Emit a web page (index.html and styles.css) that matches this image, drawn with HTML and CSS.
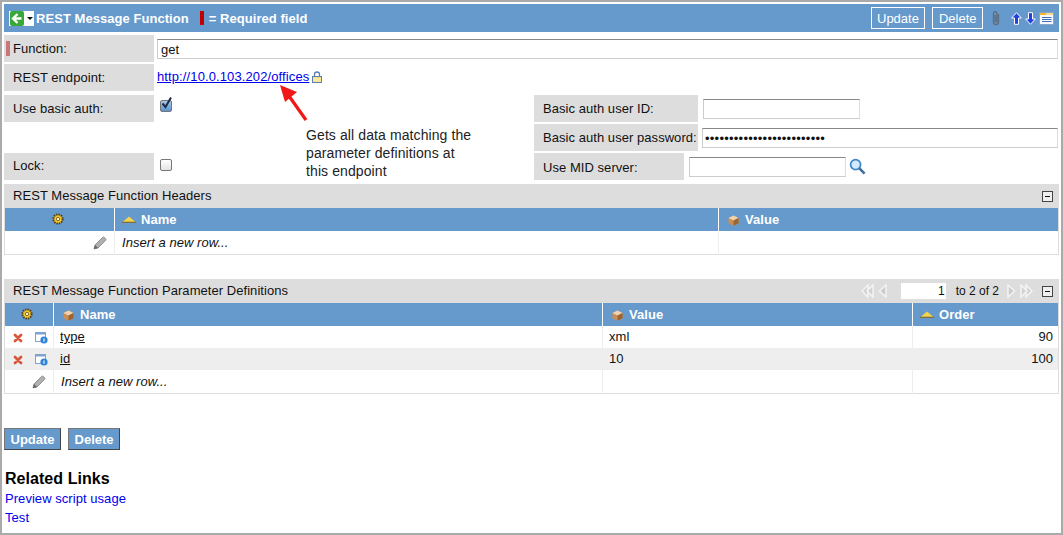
FILE: index.html
```html
<!DOCTYPE html>
<html lang="en">
<head>
    <meta charset="UTF-8">
    <title>REST Message Function</title>
    <link rel="stylesheet" href="styles.css">
</head>
<body>
    <svg class="sprites" width="0" height="0">
        <symbol id="gear" viewBox="0 0 12 12">
            <circle cx="6" cy="6" r="4.6" fill="#e8b92c" stroke="#4a3a10" stroke-width="2" stroke-dasharray="1.4 1"/>
            <circle cx="6" cy="6" r="3.2" fill="#f2c83a"/>
            <circle cx="6" cy="6" r="1.7" fill="#fff6c4" stroke="#6a5212" stroke-width=".8"/>
        </symbol>
        <symbol id="sort" viewBox="0 0 14 7">
            <path d="M7 .5L13.5 6H.5z" fill="#f4d44a"/>
            <path d="M0 6.300h14" stroke="#7d6a38" stroke-width="1.2"/>
        </symbol>
        <symbol id="box" viewBox="0 0 11 11">
            <path d="M5.500.5l5 2.400v5.400l-5 2.400-5-2.400V2.900z" fill="#c98f55"/>
            <path d="M5.500.5l5 2.400-5 2.500-5-2.500z" fill="#f0d3ad"/>
            <path d="M5.500 5.400v5.300l5-2.400V2.900z" fill="#9c6433"/>
        </symbol>
        <symbol id="pencil" viewBox="0 0 14 14">
            <path d="M1 13l1-4 7.500-7.500a1.400 1.400 0 0 1 2 0l1 1a1.400 1.400 0 0 1 0 2L5 12z" fill="#b0b0b0" stroke="#808080" stroke-width=".8"/>
            <path d="M1 13l1-4 3 3z" fill="#666"/>
        </symbol>
        <symbol id="cross" viewBox="0 0 10 10">
            <path d="M2 2l6 6M8 2l-6 6" stroke="#d9563a" stroke-width="2.8" stroke-linecap="round"/>
        </symbol>
        <symbol id="info" viewBox="0 0 13 13">
            <rect x=".5" y="1.500" width="10" height="9" fill="#fff" stroke="#7fa3cf"/>
            <path d="M.5 2h10v1.500H.5z" fill="#7fa3cf"/>
            <circle cx="9" cy="9" r="3.6" fill="#2f84d6"/>
            <path d="M9 7.400v3.300" stroke="#fff" stroke-width="1.1"/>
        </symbol>
        <symbol id="pager" viewBox="0 0 9 14">
            <path d="M8 1L1.500 7 8 13z" fill="#cbcbcb" stroke="#f4f4f4" stroke-width="1.5"/>
        </symbol>
        <symbol id="pager-double" viewBox="0 0 13 14">
            <path d="M7 1L1 7l6 6z" fill="#d2d2d2" stroke="#f4f4f4" stroke-width="1.5"/>
            <path d="M12 1L6 7l6 6z" fill="#d2d2d2" stroke="#f4f4f4" stroke-width="1.5"/>
        </symbol>
    </svg>

    <div class="page">
        <header class="title-bar">
            <svg class="back-icon" width="25" height="15" viewBox="0 0 25 15">
                <rect width="25" height="15" fill="#fff"/>
                <rect x="1" y="0" width="14" height="15" rx="2" fill="#38a838"/>
                <path d="M12.500 7.500H5M8.500 3l-4.500 4.500 4.500 4.500" fill="none" stroke="#fff" stroke-width="2.4"/>
                <path d="M18 6h6l-3 3z" fill="#111"/>
            </svg>
            <span class="title-text title-main">REST Message Function</span>
            <span class="required-mark"></span>
            <span class="title-text">= Required field</span>
            <span class="title-actions">
                <button class="outline-btn" type="button">Update</button>
                <button class="outline-btn" type="button">Delete</button>
                <svg class="clip-icon" width="10" height="16" viewBox="0 0 10 16">
                    <path d="M7.500 4v8a2.500 2.500 0 0 1-5 0V3.500a1.700 1.700 0 0 1 3.400 0V11a.8.8 0 0 1-1.600 0V5" fill="none" stroke="#5f6f80" stroke-width="1.4"/>
                </svg>
                <svg class="nav-arrow" width="11" height="13" viewBox="0 0 11 13">
                    <path d="M5.500.7L10.300 6H7.500v6.300h-4V6H.7z" fill="#1f3fe0" stroke="#fff"/>
                </svg>
                <svg class="nav-arrow" width="11" height="13" viewBox="0 0 11 13">
                    <path d="M5.500 12.300L10.300 7H7.500V.7h-4V7H.7z" fill="#1f3fe0" stroke="#fff"/>
                </svg>
                <svg class="list-icon" width="15" height="13" viewBox="0 0 15 13">
                    <rect x=".5" y=".5" width="14" height="12" fill="#f6f8fd" stroke="#8aa4c8"/>
                    <path d="M1 1h6v2H1z" fill="#f2b632"/>
                    <path d="M7 1h7v2H7z" fill="#f7dc8a"/>
                    <path d="M3 5.500h9.500M3 7.500h9.500M3 9.500h9.500" stroke="#3f6fb5"/>
                </svg>
            </span>
        </header>

        <div class="form-row">
            <div class="field-label field-label-required">Function:</div>
            <input class="text-input text-input-wide" type="text" value="get">
        </div>
        <div class="form-row">
            <div class="field-label">REST endpoint:</div>
            <div class="endpoint">
                <a href="#">http://10.0.103.202/offices</a>
                <svg class="lock-icon" width="10" height="12" viewBox="0 0 10 12">
                    <path d="M2.500 6V3.500a2.500 2.500 0 0 1 5 0V6" fill="none" stroke="#5a7fb5" stroke-width="1.3"/>
                    <rect x=".5" y="5.500" width="9" height="6" fill="#f3dd7e" stroke="#5a7fb5"/>
                    <path d="M1 8h8M1 10h8" stroke="#fff2b5"/>
                </svg>
            </div>
        </div>

        <div class="auth-block">
            <div class="auth-left">
                <div class="form-row form-row-tight">
                    <div class="field-label">Use basic auth:</div>
                    <span class="check check-on">
                        <svg width="13" height="15" viewBox="0 0 13 15">
                            <path d="M2.500 7.500l3 3.500L11 1.500" fill="none" stroke="#1d2c46" stroke-width="2"/>
                        </svg>
                    </span>
                </div>
                <div class="form-row form-row-tight">
                    <div class="field-label field-label-lock">Lock:</div>
                    <span class="check"></span>
                </div>
            </div>
            <div class="auth-right">
                <div class="form-row form-row-tight">
                    <div class="field-label field-label-mid">Basic auth user ID:</div>
                    <input class="text-input text-input-short" type="text">
                </div>
                <div class="form-row">
                    <div class="field-label field-label-mid">Basic auth user password:</div>
                    <input class="text-input text-input-fill password" type="text" value="•••••••••••••••••••••••••">
                </div>
                <div class="form-row">
                    <div class="field-label field-label-mid-short">Use MID server:</div>
                    <input class="text-input text-input-short" type="text">
                    <svg class="search-icon" width="17" height="17" viewBox="0 0 18 18">
                        <circle cx="7" cy="7" r="5.3" fill="#d5ebfb" stroke="#3f86c9" stroke-width="1.8"/>
                        <path d="M11 11l5.500 5.500" stroke="#3d6f9f" stroke-width="2.8"/>
                    </svg>
                </div>
            </div>
        </div>

        <div class="callout">
            <svg class="callout-arrow" width="30" height="37" viewBox="0 0 30 37">
                <path d="M26 35L9 11" stroke="#f01818" stroke-width="3.2"/>
                <path d="M0 0l17 7L5 17z" fill="#f01818"/>
            </svg>
            <p>Gets all data matching the parameter definitions at this endpoint</p>
        </div>

        <section class="related-list">
            <div class="list-heading">
                <span>REST Message Function Headers</span>
                <span class="collapse-btn"></span>
            </div>
            <table class="grid grid-headers">
                <colgroup><col class="col-a"><col class="col-b"><col></colgroup>
                <tr class="grid-head">
                    <th class="center"><svg class="ico-gear"><use href="#gear"/></svg></th>
                    <th><svg class="ico-sort"><use href="#sort"/></svg>Name</th>
                    <th><svg class="ico-box"><use href="#box"/></svg>Value</th>
                </tr>
                <tr>
                    <td class="right"><svg class="ico-pencil"><use href="#pencil"/></svg></td>
                    <td class="insert">Insert a new row...</td>
                    <td></td>
                </tr>
            </table>
        </section>

        <section class="related-list related-list-second">
            <div class="list-heading">
                <span>REST Message Function Parameter Definitions</span>
                <span class="pager">
                    <svg class="ico-pager-double"><use href="#pager-double"/></svg>
                    <svg class="ico-pager"><use href="#pager"/></svg>
                    <span class="page-input">1</span>
                    <span class="page-count">to 2 of 2</span>
                    <svg class="ico-pager flip"><use href="#pager"/></svg>
                    <svg class="ico-pager-double flip"><use href="#pager-double"/></svg>
                </span>
                <span class="collapse-btn"></span>
            </div>
            <table class="grid grid-params">
                <colgroup><col class="col-a"><col class="col-b"><col class="col-c"><col></colgroup>
                <tr class="grid-head">
                    <th class="center"><svg class="ico-gear"><use href="#gear"/></svg></th>
                    <th><svg class="ico-box"><use href="#box"/></svg>Name</th>
                    <th><svg class="ico-box"><use href="#box"/></svg>Value</th>
                    <th><svg class="ico-sort"><use href="#sort"/></svg>Order</th>
                </tr>
                <tr>
                    <td class="row-actions"><svg class="ico-cross"><use href="#cross"/></svg><svg class="ico-info"><use href="#info"/></svg></td>
                    <td><a class="record-link" href="#">type</a></td>
                    <td>xml</td>
                    <td class="right">90</td>
                </tr>
                <tr class="row-alt">
                    <td class="row-actions"><svg class="ico-cross"><use href="#cross"/></svg><svg class="ico-info"><use href="#info"/></svg></td>
                    <td><a class="record-link" href="#">id</a></td>
                    <td>10</td>
                    <td class="right">100</td>
                </tr>
                <tr>
                    <td class="right"><svg class="ico-pencil"><use href="#pencil"/></svg></td>
                    <td class="insert">Insert a new row...</td>
                    <td></td>
                    <td></td>
                </tr>
            </table>
        </section>

        <div class="bottom-actions">
            <button class="solid-btn" type="button">Update</button>
            <button class="solid-btn" type="button">Delete</button>
        </div>

        <h3 class="links-title">Related Links</h3>
        <a class="plain-link" href="#">Preview script usage</a>
        <a class="plain-link" href="#">Test</a>
    </div>
</body>
</html>
```

FILE: styles.css
```css
html, body {
    margin: 0;
    padding: 0;
    height: 100%;
}
body {
    font-family: "Liberation Sans", Arial, sans-serif;
    font-size: 13px;
    letter-spacing: .05px;
    color: #111;
    background: #fff;
}
.sprites {
    position: absolute;
}
.page {
    position: relative;
    box-sizing: border-box;
    height: 535px;
    border: 2px solid #aaa;
    padding: 2px 2px 0;
    overflow: hidden;
}

/* title bar */
.title-bar {
    display: flex;
    align-items: center;
    height: 28px;
    background: #6699cc;
    padding: 0 5px;
}
.back-icon {
    flex: none;
}
.title-text {
    color: #fff;
    font-weight: bold;
    white-space: nowrap;
}
.title-main {
    margin-left: 2px;
}
.required-mark {
    width: 4px;
    height: 14px;
    background: #c00000;
    margin: 0 5px 0 11px;
}
.title-actions {
    margin-left: auto;
    display: flex;
    align-items: center;
}
.outline-btn {
    font: 13px "Liberation Sans", Arial, sans-serif;
    color: #fff;
    background: transparent;
    border: 1px solid #fff;
    height: 22px;
    padding: 0 5.5px;
    margin-right: 7px;
}
.clip-icon {
    margin: 0 10px 0 1px;
}
.nav-arrow {
    margin-right: 3px;
}

/* form */
.form-row {
    display: flex;
    align-items: flex-start;
    margin-top: 2px;
}
.title-bar + .form-row {
    margin-top: 3px;
}
.form-row-tight {
    margin-top: 0;
}
.field-label {
    box-sizing: border-box;
    flex: none;
    width: 150px;
    height: 27px;
    line-height: 28px;
    padding-left: 9px;
    margin-right: 3px;
    background: #dddddd;
}
.field-label-required {
    position: relative;
}
.field-label-required::before {
    content: "";
    position: absolute;
    left: 2px;
    top: 6px;
    width: 4px;
    height: 15px;
    background: #cc7777;
}
.field-label-lock {
    line-height: 26px;
}
.field-label-mid {
    width: 164px;
    margin-right: 4px;
}
.field-label-mid-short {
    width: 150px;
    margin-right: 5px;
    line-height: 29px;
}
.text-input {
    box-sizing: border-box;
    height: 20px;
    margin-top: 4px;
    padding: 0 3px;
    font: 13px "Liberation Sans", Arial, sans-serif;
    color: #111;
    border: 1px solid #ccc;
    border-top-color: #888;
    border-right-color: #ddd;
    background: #fff;
    outline: none;
}
.text-input-wide {
    width: 901px;
}
.text-input-short {
    width: 157px;
}
.field-label-mid + .text-input-short {
    margin-left: 1px;
}
.text-input-fill {
    width: 356px;
}
.password {
    letter-spacing: .25px;
    padding-left: 2px;
}
.endpoint {
    display: flex;
    align-items: center;
    gap: 3px;
    height: 24px;
    letter-spacing: .11px;
}
.endpoint a {
    color: #0000ee;
}
.lock-icon {
    margin-top: 1px;
}
.auth-block {
    display: flex;
    margin-top: 4px;
}
.auth-left {
    width: 530px;
    flex: none;
    display: flex;
    flex-direction: column;
    justify-content: space-between;
}
.auth-right {
    flex: 1;
}
.check {
    box-sizing: border-box;
    display: flex;
    width: 12px;
    height: 12px;
    margin: 6px 0 0 3px;
    border: 1px solid #777;
    border-radius: 2px;
    background: linear-gradient(#fff, #e3e3e3);
}
.check-on {
    background: linear-gradient(#a9c9ea, #5b94cf);
    position: relative;
    margin-top: 5px;
}
.check-on svg {
    position: absolute;
    left: -1px;
    top: -5px;
}
.search-icon {
    margin: 5px 0 0 3px;
}

/* annotation drawn over the form */
.callout {
    position: absolute;
    left: 304px;
    top: 84px;
    width: 172px;
}
.callout-arrow {
    position: absolute;
    left: -26px;
    top: -1px;
}
.callout p {
    margin: 40px 0 0;
    font-size: 14px;
    letter-spacing: .1px;
    line-height: 18px;
    color: #222;
}

/* related lists */
.related-list {
    margin-top: 4px;
}
.related-list-second {
    margin-top: 24px;
}
.list-heading {
    display: flex;
    align-items: center;
    box-sizing: border-box;
    height: 24px;
    padding: 0 6px 2px 9px;
    background: #dddddd;
}
.collapse-btn {
    position: relative;
    box-sizing: border-box;
    width: 11px;
    height: 11px;
    margin: 2px 0 0 auto;
    border: 1px solid #444;
    background: #f0f0f0;
}
.collapse-btn::after {
    content: "";
    position: absolute;
    left: 2px;
    top: 4px;
    width: 5px;
    height: 1px;
    background: #111;
}
.pager {
    display: flex;
    align-items: center;
    margin: 2px 0 0 auto;
}
.pager + .collapse-btn {
    margin-left: 9px;
}
.ico-pager {
    width: 9px;
    height: 14px;
}
.ico-pager-double {
    width: 13px;
    height: 14px;
    margin-right: 4px;
}
.flip {
    transform: scaleX(-1);
}
.ico-pager.flip {
    margin-right: 4px;
}
.ico-pager-double.flip {
    margin-right: 0;
}
.page-input {
    box-sizing: border-box;
    width: 45px;
    height: 16px;
    line-height: 17px;
    text-align: right;
    padding-right: 1px;
    margin-left: 14px;
    background: #fff;
    font-size: 12px;
}
.page-count {
    margin: 0 8px 0 10px;
    font-size: 12px;
    letter-spacing: 0;
}
.grid {
    width: 100%;
    table-layout: fixed;
    border-collapse: collapse;
    border-left: 1px solid #ddd;
    border-right: 1px solid #ddd;
    border-bottom: 1px solid #ddd;
}
.grid-headers .col-a {
    width: 110px;
}
.grid-headers .col-b {
    width: 604px;
}
.grid-params .col-a {
    width: 49px;
}
.grid-params .col-b {
    width: 549px;
}
.grid-params .col-c {
    width: 310px;
}
.grid th {
    height: 23px;
    padding: 0 0 0 7px;
    background: #6699cc;
    color: #fff;
    font-size: 13px;
    font-weight: bold;
    text-align: left;
    border-left: 1px solid #fff;
}
.grid th:first-child {
    border-left: none;
    padding: 0 4px 0 0;
}
.grid td {
    height: 21px;
    padding: 0 5px 1px 6px;
    border-left: 1px solid #eee;
}
.grid td:first-child {
    border-left: none;
}
.grid td.insert {
    height: 23px;
    padding: 0 5px 0 7px;
    font-style: italic;
}
.grid td.row-actions {
    padding-left: 8px;
    white-space: nowrap;
}
.grid .center {
    text-align: center;
}
.grid .right {
    text-align: right;
}
.row-alt td {
    background: #eeeeee;
}
.record-link {
    color: #111;
}
.grid svg {
    vertical-align: middle;
}
.ico-gear {
    width: 12px;
    height: 12px;
    margin-top: -3px;
}
.ico-sort {
    width: 14px;
    height: 7px;
    margin-right: 5px;
    margin-top: -2px;
}
.ico-box {
    width: 11px;
    height: 11px;
    margin: 0 6px 0 2px;
}
.ico-pencil {
    width: 14px;
    height: 14px;
    margin-right: 2px;
}
.ico-cross {
    width: 10px;
    height: 10px;
    margin-right: 12px;
}
.ico-info {
    width: 13px;
    height: 13px;
}

/* bottom */
.bottom-actions {
    display: flex;
    gap: 7px;
    margin-top: 34px;
}
.solid-btn {
    box-sizing: border-box;
    height: 22px;
    padding: 0 5.5px;
    font: bold 13px "Liberation Sans", Arial, sans-serif;
    color: #fff;
    background: #6699cc;
    border: 1px solid #444;
    border-top-color: #777;
    border-left-color: #777;
}
.links-title {
    margin: 20px 0 0 1px;
    font-size: 16px;
    line-height: 18px;
    color: #000;
}
.plain-link {
    display: block;
    margin: 3px 0 0 1px;
    line-height: 16px;
    color: #0000ee;
    text-decoration: none;
}
```
